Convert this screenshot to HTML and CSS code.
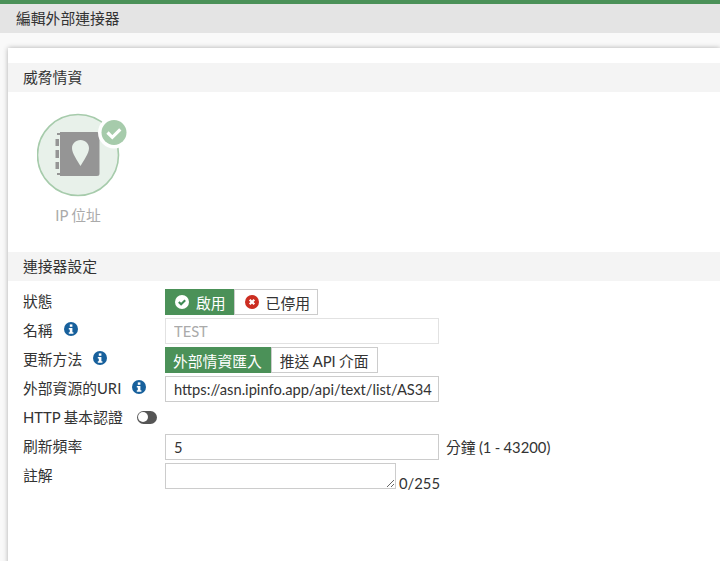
FILE: index.html
```html
<!DOCTYPE html>
<html lang="zh-Hant">
<head>
<meta charset="utf-8">
<title>編輯外部連接器</title>
<link rel="stylesheet" href="styles.css">
</head>
<body>
<header class="page-header">編輯外部連接器</header>
<main class="card">
  <h2 class="section-title">威脅情資</h2>
  <div class="threat">
    <div class="threat-icon">
      <svg width="92" height="92" viewBox="0 0 92 92">
        <circle cx="41" cy="50" r="40.500" fill="#e8f1ea" stroke="#a6cbab" stroke-width="1.600"/>
        <path d="M20 28h3v-1h37a2.500 2.500 0 0 1 2.500 2.500v39a2.500 2.500 0 0 1-2.500 2.500H23v-1h-3v-2h3V30h-3zM18.500 34H22v7h-3.500zM18.500 45H22v8h-3.500zM18.500 57H22v7h-3.500z" fill="#959595"/>
        <path d="M43.500 35c-5 0-8.500 3.700-8.500 8.300 0 5 5.500 12.700 8.500 17.700 3-5 8.500-12.700 8.500-17.700 0-4.600-3.500-8.300-8.500-8.300z" fill="#e8f1ea"/>
        <circle cx="77" cy="27.500" r="16" fill="#fff"/>
        <circle cx="77" cy="27.500" r="12.500" fill="#a6cbab"/>
        <path d="M70.500 27.500l4.800 4.800 8-8" fill="none" stroke="#fff" stroke-width="3.200"/>
      </svg>
    </div>
    <div class="threat-label">IP 位址</div>
  </div>
  <h2 class="section-title section-settings">連接器設定</h2>
  <form class="form">
    <div class="row">
      <span class="label">狀態</span>
      <div class="toggle">
        <button type="button" class="seg seg-on seg-status">
          <svg class="seg-icon" width="14" height="14" viewBox="0 0 14 14"><circle cx="7" cy="7" r="7" fill="#fff"/><path d="M3.800 7l2.300 2.300 4.100-4.100" fill="none" stroke="#3f8a55" stroke-width="2"/></svg>
          啟用
        </button>
        <button type="button" class="seg seg-status seg-off">
          <svg class="seg-icon" width="14" height="14" viewBox="0 0 14 14"><circle cx="7" cy="7" r="7" fill="#cc2e22"/><path d="M4.700 4.700l4.600 4.600M9.300 4.700l-4.600 4.600" stroke="#fff" stroke-width="2.200"/></svg>
          已停用
        </button>
      </div>
    </div>
    <div class="row">
      <span class="label">名稱<svg class="info" width="14" height="14" viewBox="0 0 14 14"><use href="#info"/></svg></span>
      <input class="input input-disabled" value="TEST" disabled>
    </div>
    <div class="row">
      <span class="label">更新方法<svg class="info" width="14" height="14" viewBox="0 0 14 14"><use href="#info"/></svg></span>
      <div class="toggle">
        <button type="button" class="seg seg-on">外部情資匯入</button>
        <button type="button" class="seg seg-off">推送 API 介面</button>
      </div>
    </div>
    <div class="row">
      <span class="label">外部資源的URI<svg class="info" width="14" height="14" viewBox="0 0 14 14"><use href="#info"/></svg></span>
      <input class="input" value="https://asn.ipinfo.app/api/text/list/AS34">
    </div>
    <div class="row">
      <span class="label label-auto">HTTP 基本認證</span>
      <span class="switch"><span class="knob"></span></span>
    </div>
    <div class="row">
      <span class="label">刷新頻率</span>
      <input class="input" value="5">
      <span class="hint">分鐘 (1 - 43200)</span>
    </div>
    <div class="row row-top">
      <span class="label">註解</span>
      <textarea class="textarea"></textarea>
      <span class="counter">0/255</span>
    </div>
  </form>
</main>
<svg class="defs" width="0" height="0">
  <symbol id="info" viewBox="0 0 14 14">
    <circle cx="7" cy="7" r="7" fill="#17609c"/>
    <rect x="5.800" y="2.400" width="2.600" height="2.400" fill="#fff"/>
    <path d="M4.800 6h3.600v4.200h1v1.500H4.800v-1.500h1V7.500h-1z" fill="#fff"/>
  </symbol>
</svg>
</body>
</html>
```

FILE: styles.css
```css
* {
  box-sizing: border-box;
}

html,
body {
  height: 100%;
}

body {
  margin: 0;
  overflow: hidden;
  background: #f9f9f9;
  border-top: 4px solid #4b9158;
  color: #333;
  font-family: Lato, "Noto Sans CJK TC", sans-serif;
  font-size: 14.800px;
  word-spacing: -0.500px;
}

.page-header {
  height: 29px;
  padding: 1px 0 0 16px;
  background: #e4e4e4;
  line-height: 27px;
}

.card {
  height: 520px;
  margin: 15px 0 0 8px;
  padding-top: 15px;
  background: #fff;
  box-shadow: 0 0 5px rgba(0, 0, 0, 0.3);
}

.section-title {
  height: 29px;
  margin: 0;
  padding: 1px 0 0 15px;
  background: #f4f4f4;
  font-size: inherit;
  font-weight: 400;
  line-height: 27px;
}

.threat {
  width: 140px;
  height: 160px;
  padding: 13px 0 0 29px;
}

.threat-icon {
  height: 92px;
}

.threat-label {
  width: 82px;
  margin-top: 6px;
  color: #aaa;
  line-height: 24px;
  text-align: center;
}

.form {
  display: flex;
  flex-direction: column;
  gap: 3px;
  padding: 8px 0 0 15px;
}

.row {
  display: flex;
  align-items: center;
  height: 26px;
}

.row-top {
  align-items: flex-start;
}

.label {
  display: flex;
  flex: none;
  align-items: center;
  width: 142px;
  height: 26px;
  padding-bottom: 4px;
  white-space: nowrap;
}

.label-auto {
  width: auto;
}

.info {
  margin-left: 11px;
}

.toggle {
  display: flex;
}

.seg {
  display: flex;
  align-items: center;
  height: 26px;
  margin: 0;
  padding: 0 8px;
  border: 1px solid #ccc;
  border-left-width: 0;
  background: #fff;
  color: #333;
  font: inherit;
  word-spacing: inherit;
  white-space: nowrap;
}

.seg-on {
  border-color: #4b9158;
  background: #4b9158;
  color: #fff;
}

.seg-status {
  padding: 0 7px 0 10px;
}

.seg-off {
  border-left: 1px solid #ccc;
}

.seg-icon {
  margin-right: 7px;
}

.input {
  flex: none;
  width: 274px;
  height: 26px;
  padding: 0 0 0 8px;
  border: 1px solid #ccc;
  border-radius: 0;
  color: #333;
  font: inherit;
  font-size: 14.700px;
  word-spacing: 0;
  outline: 0;
}

.input-disabled {
  border-color: #e2e2e2;
  background: #fff;
  color: #aaa;
}

.switch {
  position: relative;
  width: 20px;
  height: 13px;
  margin: 0 0 2px 14px;
  border-radius: 7px;
  background: #555;
}

.knob {
  position: absolute;
  top: 1.500px;
  left: 1.500px;
  width: 10px;
  height: 10px;
  border-radius: 50%;
  background: #fff;
}

.hint {
  margin: 0 0 2px 7px;
  white-space: nowrap;
}

.textarea {
  flex: none;
  width: 231px;
  height: 26px;
  margin: 0;
  border: 1px solid #ccc;
  border-radius: 0;
  font: inherit;
  outline: 0;
}

.counter {
  align-self: flex-end;
  margin: 0 0 -3px 3px;
}

.defs {
  position: absolute;
}
```
